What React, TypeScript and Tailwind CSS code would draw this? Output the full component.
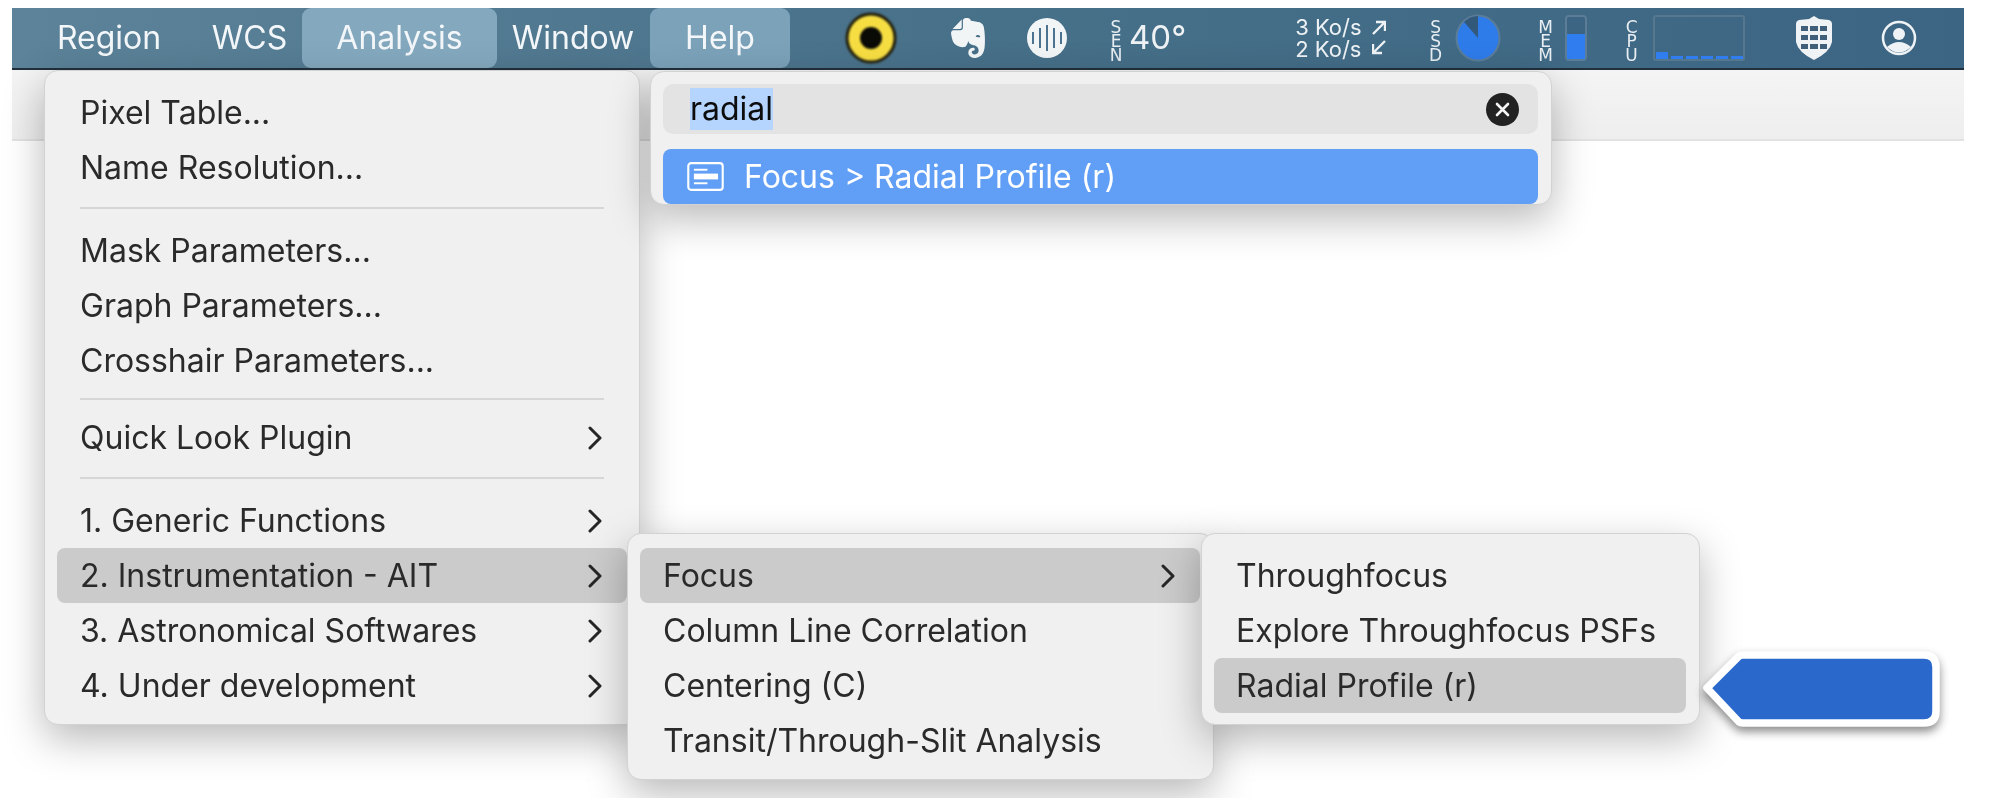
import React from "react";
import { SiEvernote } from "react-icons/si";

const Chevron = () => (
  <svg width="16" height="24" viewBox="0 0 16 24" fill="none" className="shrink-0">
    <path d="M3 2 L13 12 L3 22" stroke="#262626" strokeWidth="3" strokeLinecap="round" strokeLinejoin="round" />
  </svg>
);

const Row = ({ label, active, arrow, pad }: { label: string; active?: boolean; arrow?: boolean; pad?: string }) => (
  <div className={`h-[55px] flex items-center justify-between pr-[24px] rounded-[8px] ${pad ?? "pl-[23px]"} ${active ? "bg-[#cbcbcb]" : ""}`}>
    <span className="whitespace-nowrap">{label}</span>
    {arrow && <Chevron />}
  </div>
);

const Sep = ({ className }: { className: string }) => <div className={`mx-[23px] h-[2px] bg-[#d6d6d6] ${className}`} />;

const Stack = ({ letters, className }: { letters: string; className: string }) => (
  <div className={`flex justify-center shrink-0 ${className}`}>
    <span className="[writing-mode:vertical-rl] [text-orientation:upright] font-['DejaVu_Sans',sans-serif] text-[17px] leading-[16px] tracking-[-6px] text-[#e8eef2] whitespace-nowrap">
      {letters}
    </span>
  </div>
);

const TopItem = ({ label, className }: { label: string; className: string }) => (
  <div className={`h-[60px] shrink-0 flex items-center justify-center rounded-[9px] text-[#f4f7f9] ${className}`}>{label}</div>
);

const panel = "absolute bg-[#f0f0f0] rounded-[14px] border border-[#d2d2d2] shadow-[0_14px_40px_rgba(0,0,0,0.28)]";

export default function App() {
  return (
    <div className="relative w-[1994px] h-[798px] bg-white overflow-hidden text-[32px] font-['Inter','Liberation_Sans',sans-serif] blur-[0.4px]">
      <div className="pt-2 pl-3 pr-[30px]">
        <div className="h-[62px] border-b-2 border-[#20303c] bg-gradient-to-r from-[#5c8399] via-[#477089] to-[#3b6583] flex items-center">
          <TopItem label="Region" className="w-[104px] ml-[45px]" />
          <TopItem label="WCS" className="w-[73px] ml-[52px]" />
          <TopItem label="Analysis" className="w-[195px] ml-[16px] bg-[#84a9bf]" />
          <TopItem label="Window" className="w-[118px] ml-[17px]" />
          <TopItem label="Help" className="w-[140px] ml-[18px] bg-[#7ba2b9]" />

          <svg width="52" height="52" viewBox="0 0 52 52" className="ml-[55px] shrink-0 blur-[1px]">
            <circle cx="26" cy="26" r="24" fill="#f6de42" stroke="#23200c" strokeWidth="3" />
            <circle cx="26" cy="26" r="11" fill="#0a0a06" />
          </svg>
          <SiEvernote className="ml-[51px] w-[40px] h-[46px] text-[#f2f5f6] shrink-0" />
          <svg width="40" height="40" viewBox="0 0 40 40" className="ml-[39px] shrink-0">
            <circle cx="20" cy="20" r="20" fill="#f2f5f6" />
            {[
              [6, 14, 26],
              [13, 10, 30],
              [20, 7, 33],
              [27, 10, 30],
              [34, 14, 26],
            ].map(([x, a, b]) => (
              <line key={x} x1={x} x2={x} y1={a} y2={b} stroke="#4b7390" strokeWidth="2" />
            ))}
          </svg>
          <Stack letters="SEN" className="ml-[42px] w-[14px]" />
          <span className="ml-[6px] text-[33px] text-[#eef2f5] shrink-0">40°</span>
          <div className="ml-[109px] text-[22px] leading-[22px] text-[#eef2f5] whitespace-pre shrink-0">{"3 Ko/s\n2 Ko/s"}</div>
          <svg width="14" height="38" viewBox="0 0 14 38" fill="none" stroke="#eef2f5" strokeWidth="2.4" className="ml-[10px] shrink-0">
            <path d="M1 15 L13 3 M4 3 H13 V12" />
            <path d="M13 22 L1 34 M1 25 V34 H10" />
          </svg>
          <Stack letters="SSD" className="ml-[43px] w-[14px]" />
          <svg width="46" height="48" viewBox="0 0 46 48" className="ml-[12px] shrink-0">
            <ellipse cx="23" cy="24" rx="21.5" ry="22.5" fill="#2e7bea" stroke="#5b7d98" strokeWidth="2" />
            <path d="M23 24 L23 2 A21 22 0 0 0 9 8 Z" fill="#33597a" />
          </svg>
          <Stack letters="MEM" className="ml-[37px] w-[16px]" />
          <div className="ml-[11px] w-[22px] h-[46px] rounded-[4px] border-2 border-[#5b7d98] flex flex-col justify-end bg-[#3c6583] shrink-0">
            <div className="h-[25px] bg-[#2f7dee]" />
          </div>
          <Stack letters="CPU" className="ml-[37px] w-[16px]" />
          <div className="ml-[13px] w-[92px] h-[46px] rounded-[3px] border-2 border-[#55788f] flex items-end gap-[3px] pl-px shrink-0">
            <div className="w-[13px] h-[7px] bg-[#2f7dee]" />
            {[0, 1, 2, 3, 4].map((i) => (
              <div key={i} className="w-[12px] h-[3px] bg-[#2f7dee]" />
            ))}
          </div>
          <svg width="36" height="44" viewBox="0 0 36 44" className="ml-[51px] shrink-0">
            <path d="M18 0 L23 3 L33 4 Q36 5 36 8 V26 Q34 36 18 44 Q2 36 0 26 V8 Q0 5 3 4 L13 3 Z" fill="#f0f3f5" />
            {[10, 19, 28].map((y) =>
              [[5, 7], [14, 8], [24, 7]].map(([x, w]) => <rect key={`${x}-${y}`} x={x} y={y} width={w} height="5" fill="#3f5f7a" />)
            )}
          </svg>
          <svg width="36" height="36" viewBox="0 0 36 36" fill="none" className="ml-[49px] shrink-0">
            <circle cx="18" cy="18" r="16" stroke="#f0f3f5" strokeWidth="2.5" />
            <circle cx="18" cy="14" r="6" fill="#f0f3f5" />
            <path d="M6 27 Q18 17 30 27 Q18 38 6 27 Z" fill="#f0f3f5" />
          </svg>
        </div>
        <div className="h-[71px] border-b-2 border-[#e2e2e2] bg-gradient-to-b from-[#f4f4f4] to-[#eeeeee]" />
      </div>

      {/* Main menu */}
      <div className={`${panel} left-[44px] top-[70px] w-[596px] h-[655px] px-[12px] pt-[14px] text-[#2a2a2a]`}>
        <Row label="Pixel Table..." />
        <Row label="Name Resolution..." />
        <Sep className="mt-[12px] mb-[14px]" />
        <Row label="Mask Parameters..." />
        <Row label="Graph Parameters..." />
        <Row label="Crosshair Parameters..." />
        <Sep className="mt-[10px] mb-[10px]" />
        <Row label="Quick Look Plugin" arrow />
        <Sep className="mt-[12px] mb-[14px]" />
        <Row label="1. Generic Functions" arrow />
        <Row label="2. Instrumentation - AIT" active arrow />
        <Row label="3. Astronomical Softwares" arrow />
        <Row label="4. Under development" arrow />
      </div>

      {/* Second level */}
      <div className={`${panel} left-[627px] top-[533px] w-[587px] h-[247px] pl-[12px] pr-[13px] pt-[14px] text-[#2a2a2a]`}>
        <Row label="Focus" active arrow />
        <Row label="Column Line Correlation" />
        <Row label="Centering (C)" />
        <Row label="Transit/Through-Slit Analysis" />
      </div>

      {/* Third level */}
      <div className={`${panel} left-[1201px] top-[533px] w-[499px] h-[192px] pl-[12px] pr-[13px] pt-[14px] text-[#2a2a2a]`}>
        <Row label="Throughfocus" pad="pl-[22px]" />
        <Row label="Explore Throughfocus PSFs" pad="pl-[22px]" />
        <Row label="Radial Profile (r)" active pad="pl-[22px]" />
      </div>

      {/* Search panel */}
      <div className={`${panel} left-[650px] top-[71px] w-[902px] h-[134px] pl-[12px] pr-[13px] pt-[12px]`}>
        <div className="h-[50px] rounded-[10px] bg-[#e3e3e3] flex items-center justify-between pl-[27px] pr-[19px]">
          <span className="bg-[#b5d5ff] h-[42px] leading-[42px] text-[#0c0c0c]">radial</span>
          <svg width="33" height="33" viewBox="0 0 33 33" className="shrink-0">
            <circle cx="16.5" cy="16.5" r="16.5" fill="#222222" />
            <path d="M11 11 L22 22 M22 11 L11 22" stroke="#f4f4f4" strokeWidth="2.6" strokeLinecap="round" />
          </svg>
        </div>
        <div className="mt-[15px] h-[55px] rounded-[8px] bg-[#619ff6] flex items-center pl-[24px] gap-[20px] text-white">
          <svg width="37" height="29" viewBox="0 0 38 30" fill="none" className="shrink-0">
            <rect x="1.2" y="1.2" width="35.6" height="27.6" rx="3" stroke="white" strokeWidth="2.2" />
            <line x1="7" y1="8" x2="21" y2="8" stroke="white" strokeWidth="2" />
            <rect x="7" y="12" width="25" height="6" fill="white" />
            <line x1="7" y1="22" x2="21" y2="22" stroke="white" strokeWidth="2" />
          </svg>
          <span className="whitespace-nowrap">Focus &gt; Radial Profile (r)</span>
        </div>
      </div>

      {/* Callout */}
      <svg width="250" height="90" viewBox="0 0 250 90" className="absolute left-[1698px] top-[648px] drop-shadow-[0_5px_5px_rgba(0,0,0,0.45)]">
        <path
          d="M9 40 L41 8 Q42 7 45 7 H226 Q238 7 238 19 V63 Q238 75 226 75 H45 Q42 75 41 74 Z"
          fill="#2a68cc"
          stroke="white"
          strokeWidth="7.5"
          strokeLinejoin="round"
        />
      </svg>
    </div>
  );
}
